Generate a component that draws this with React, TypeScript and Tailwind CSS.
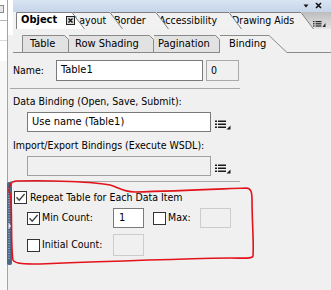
const font = "font-['DejaVu_Sans_Condensed','Liberation_Sans',sans-serif]"

function Check({ on }: { on?: boolean }) {
  return (
    <span className="flex h-[13px] w-[13px] shrink-0 items-center justify-center border border-[#333333] bg-white">
      {on && (
        <svg width="11" height="11" viewBox="0 0 11 11">
          <path d="M1.5 5.2 L4.2 8.2 L9.6 2" fill="none" stroke="#404040" strokeWidth="1.3" />
        </svg>
      )}
    </span>
  )
}

function ListIcon() {
  return (
    <svg width="16" height="10" viewBox="0 0 16 10" className="shrink-0">
      <rect x="0" y="0.5" width="2" height="1.5" fill="#1a1a1a" />
      <rect x="0" y="3.5" width="2" height="1.5" fill="#1a1a1a" />
      <rect x="0" y="6.5" width="2" height="1.5" fill="#1a1a1a" />
      <rect x="3" y="0.5" width="8" height="1.5" fill="#1a1a1a" />
      <rect x="3" y="3.5" width="8" height="1.5" fill="#1a1a1a" />
      <rect x="3" y="6.5" width="8" height="1.5" fill="#1a1a1a" />
      <path d="M15.5 5.5 L15.5 9.5 L11.5 9.5 Z" fill="#1a1a1a" />
    </svg>
  )
}

function TopTab({
  w,
  fill,
  className,
  first,
  children,
}: {
  w: number
  fill: string
  className: string
  first?: boolean
  children: React.ReactNode
}) {
  return (
    <div className={`relative h-[17px] shrink-0 ${className}`}>
      <svg className="absolute left-0 top-0" width={w} height={17}>
        <polygon points={`0,0 ${w - 13},0 ${w},17 0,17`} fill={fill} />
        <polyline
          points={`${first ? '0.5,17 0.5,0.5' : '0,0.5'} ${w - 13},0.5 ${w - 0.5},17`}
          fill="none"
          stroke="#7f7f7f"
        />
      </svg>
      <span className="relative flex h-[17px] items-center whitespace-nowrap">{children}</span>
    </div>
  )
}

function SubTab({
  w,
  className,
  first,
  children,
}: {
  w: number
  className: string
  first?: boolean
  children: React.ReactNode
}) {
  return (
    <div className={`relative h-[18px] shrink-0 ${className}`}>
      <svg className="absolute left-0 top-0" width={w} height={18}>
        <polygon points={`0,0 ${w - 4},0 ${w},4 ${w},18 0,18`} fill="#e2e2e2" />
        <polyline
          points={`${first ? '0.5,18 0.5,0.5' : '0,0.5'} ${w - 4.5},0.5 ${w - 0.5},4.5 ${w - 0.5},18`}
          fill="none"
          stroke="#8a8a8a"
        />
        <line x1="0" y1="17.5" x2={w} y2="17.5" stroke="#8a8a8a" />
      </svg>
      <span className="relative flex h-[18px] items-center whitespace-nowrap">{children}</span>
    </div>
  )
}

export default function App() {
  return (
    <div className={`relative flex h-[290px] w-[331px] overflow-hidden bg-[#f0f0f0] text-[10.5px] text-black ${font}`}>
      {/* neighbouring pane */}
      <div className="flex w-[8px] shrink-0 flex-col border-r border-[#a3a3a3] bg-[#f7f7f7]">
        <div className="h-[21px] border-b border-[#b8b8b8] bg-white pt-[5px]">
          <div className="h-[8px] w-[4px] border-y border-r border-[#8a8a8a] bg-[#e8e8e8]" />
        </div>
        <div className="h-[20px] border-b border-[#d8d8d8] bg-white" />
        <div className="h-[20px] bg-white" />
      </div>

      {/* object palette */}
      <div className="relative flex min-w-0 flex-1 flex-col">
        <div className="flex">
          <div className="w-[5px] shrink-0 bg-white" />
          <div className="flex min-w-0 flex-1 flex-col">
            <div className="flex h-[12px] items-start justify-end gap-[6px] bg-gradient-to-b from-[#d9e4f2] to-[#c6d5e9] pr-[9px] pt-[1px]">
              <svg width="6" height="6" viewBox="0 0 6 6" className="mt-[2px]">
                <path d="M0.5 1.5 L5.5 1.5 L3 4.5 Z" fill="#111" />
              </svg>
              <svg width="7" height="7" viewBox="0 0 7 7" className="mt-[1px]">
                <path d="M1 1 L6 6 M6 1 L1 6" stroke="#111" strokeWidth="1.6" />
              </svg>
            </div>
            <div className="flex h-[17px] bg-[#f2f2f2] pl-[3px]">
              <TopTab w={69} fill="#ffffff" first className="z-50 w-[69px] pl-[5px]">
                <span className="text-[11px] font-bold">Object</span>
                <svg width="9" height="9" viewBox="0 0 9 9" className="ml-[9px]">
                  <rect x="0.5" y="0.5" width="8" height="8" fill="#d8d8d8" stroke="#222" />
                  <path d="M2.5 2.5 L6.5 6.5 M6.5 2.5 L2.5 6.5" stroke="#111" strokeWidth="1.3" />
                </svg>
              </TopTab>
              <TopTab w={51} fill="#f1f1f1" className="z-40 ml-[-13px] w-[51px] pl-[2px]">
                Layout
              </TopTab>
              <TopTab w={58} fill="#f1f1f1" className="z-30 ml-[-12px] w-[58px] pl-[3px]">
                Border
              </TopTab>
              <TopTab w={85} fill="#f1f1f1" className="z-20 ml-[-12px] w-[85px] pl-[2px]">
                Accessibility
              </TopTab>
              <TopTab w={84} fill="#f1f1f1" className="z-10 ml-[-12px] w-[84px] pl-[2px]">
                Drawing Aids
              </TopTab>
              <div className="ml-[-12px] flex h-[17px] flex-1 items-end justify-end bg-gradient-to-b from-[#bdbdbd] to-[#e4e4e4] pb-[2px] pr-[5px]">
                <svg width="13" height="6" viewBox="0 0 13 6">
                  <rect x="0" y="0" width="1.5" height="1.2" fill="#222" />
                  <rect x="0" y="2.2" width="1.5" height="1.2" fill="#222" />
                  <rect x="0" y="4.4" width="1.5" height="1.2" fill="#222" />
                  <rect x="2.5" y="0" width="6" height="1.2" fill="#222" />
                  <rect x="2.5" y="2.2" width="6" height="1.2" fill="#222" />
                  <rect x="2.5" y="4.4" width="6" height="1.2" fill="#222" />
                  <path d="M12.5 2 L12.5 6 L9.5 6 Z" fill="#222" />
                </svg>
              </div>
            </div>
            <div className="h-[6px]" />
          </div>
        </div>

        {/* sub tabs */}
        <div className="ml-[5px] flex h-[18px] text-[11px]">
          <div className="h-[18px] w-[9px] shrink-0 border-b border-[#8a8a8a]" />
          <SubTab w={47} first className="w-[47px] pl-[8px]">
            Table
          </SubTab>
          <SubTab w={85} className="w-[85px] pl-[6px]">
            Row Shading
          </SubTab>
          <SubTab w={66} className="w-[66px] pl-[4px]">
            Pagination
          </SubTab>
          <div className="relative h-[18px] w-[68px] shrink-0 pl-[9px]">
            <svg className="absolute left-0 top-0" width={68} height={18}>
              <polygon points="0,0 49,0 68,18 0,18" fill="#f0f0f0" />
              <polyline points="0,0.5 49,0.5 67,17.5 68,17.5" fill="none" stroke="#8a8a8a" />
            </svg>
            <span className="relative flex h-[18px] items-center">Binding</span>
          </div>
          <div className="h-[18px] flex-1 border-b border-[#8a8a8a]" />
        </div>

        {/* binding content */}
        <div className="flex flex-col">
          <div className="mt-[7px] flex h-[21px] items-center pl-[5px]">
            <span className="w-[43px] shrink-0">Name:</span>
            <div className="flex h-[21px] w-[147px] items-center border border-[#7a7a7a] bg-white pl-[4px] text-[11px]">
              Table1
            </div>
            <div className="ml-[3px] flex h-[21px] w-[33px] items-center border border-[#a9a9a9] bg-[#f0f0f0] pl-[4px]">
              0
            </div>
          </div>

          <div className="ml-[2px] mt-[7px] h-px w-[230px] bg-[#a8a8a8]" />

          <div className="mt-[6px] flex h-[13px] items-center pl-[5px]">Data Binding (Open, Save, Submit):</div>
          <div className="mt-[4px] flex items-center pl-[19px]">
            <div className="flex h-[20px] w-[184px] items-center border border-[#7a7a7a] bg-white pl-[4px] text-[11px]">
              Use name (Table1)
            </div>
            <div className="ml-[4px] mt-[5px]">
              <ListIcon />
            </div>
          </div>

          <div className="mt-[7px] flex h-[13px] items-center pl-[5px]">Import/Export Bindings (Execute WSDL):</div>
          <div className="mt-[4px] flex items-center pl-[19px]">
            <div className="h-[20px] w-[184px] border border-[#a0a0a0] bg-[#f0f0f0]" />
            <div className="ml-[4px] mt-[5px]">
              <ListIcon />
            </div>
          </div>

          <div className="ml-[2px] mt-[5px] h-px w-[230px] bg-[#a8a8a8]" />

          <div className="mt-[9px] flex h-[13px] items-center pl-[6px]">
            <Check on />
            <span className="ml-[3px] whitespace-nowrap">Repeat Table for Each Data Item</span>
          </div>

          <div className="mt-[4px] flex h-[20px] items-center pl-[19px]">
            <Check on />
            <span className="ml-[2px] w-[71px] shrink-0">Min Count:</span>
            <div className="flex h-[20px] w-[31px] items-center border border-[#7a7a7a] bg-white pl-[5px] text-[11px]">
              1
            </div>
            <div className="ml-[9px]">
              <Check />
            </div>
            <span className="ml-[2px] w-[32px] shrink-0">Max:</span>
            <div className="h-[20px] w-[31px] border border-[#cccccc] bg-[#f0f0f0]" />
          </div>

          <div className="mt-[6px] flex h-[22px] items-center pl-[19px]">
            <Check />
            <span className="ml-[2px] w-[71px] shrink-0">Initial Count:</span>
            <div className="h-[22px] w-[31px] border border-[#cccccc] bg-[#f0f0f0]" />
          </div>
        </div>

        {/* splitter handle */}
        <div className="absolute left-[-1px] top-[182px] flex h-[83px] w-[5px] flex-col items-center justify-center rounded-[2px] bg-[#4a6887]">
          <svg width="5" height="83" viewBox="0 0 5 83">
            <line x1="2" y1="6" x2="2" y2="77" stroke="#c9d8ea" strokeDasharray="1 1.5" />
            <path d="M1.5 41 L4.5 44 L1.5 47 Z" fill="#dbe6f3" />
          </svg>
        </div>
      </div>

      {/* hand-drawn red marking */}
      <svg className="pointer-events-none absolute left-0 top-0" width="331" height="290" viewBox="0 0 331 290">
        <path
          d="M9 192 C9 186 10 182 16 181 C50 180 95 182 110 185 C118 187 122 192 135 192 C180 191 220 189 246 188 C251 188 252 192 252 200 C252 220 254 245 253 256 C252 259 245 258 230 258 C170 259 90 262 40 264 C25 264 15 264 13 260 C11 250 12 220 11 200 C11 196 10 193 9 192 Z"
          fill="none"
          stroke="#e3121b"
          strokeWidth="1.6"
        />
      </svg>
    </div>
  )
}
